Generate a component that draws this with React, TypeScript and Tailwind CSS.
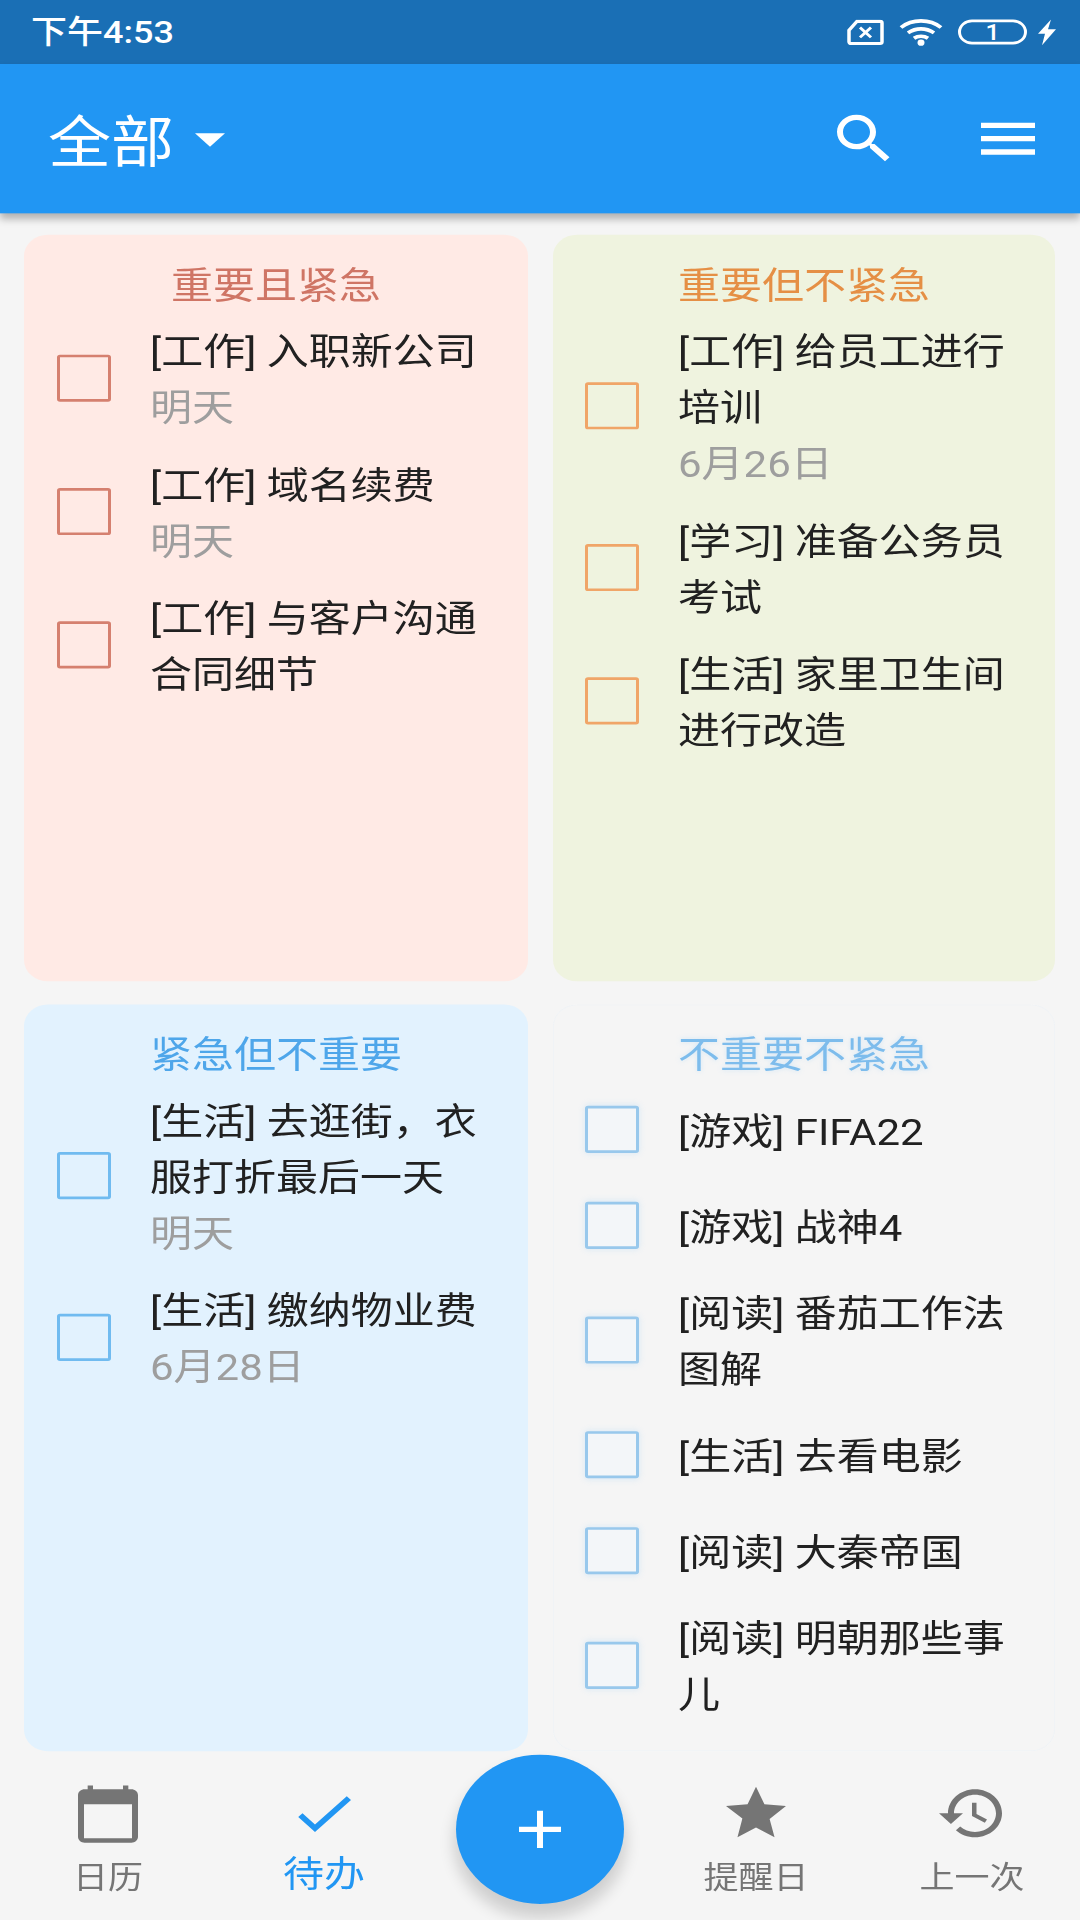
import React from "react"

const FONT = "font-['Roboto','Noto_Sans_CJK_SC',sans-serif]"

type Item = { text: string; date?: string }
type Quadrant = {
  title: string
  titleClass: string
  cardClass: string
  boxClass: string
  rowClass: string
  items: Item[]
}

const QUADRANTS: Quadrant[] = [
  {
    title: "重要且紧急",
    titleClass: "text-[#cf7565]",
    cardClass: "bg-[#ffeae5]",
    boxClass: "border-[#d5806f]",
    rowClass: "pl-[33px]",
    items: [
      { text: "[工作] 入职新公司", date: "明天" },
      { text: "[工作] 域名续费", date: "明天" },
      { text: "[工作] 与客户沟通合同细节" }
    ]
  },
  {
    title: "重要但不紧急",
    titleClass: "text-[#e58f45]",
    cardClass: "bg-[#eff3df]",
    boxClass: "border-[#f0a568]",
    rowClass: "pl-[32px]",
    items: [
      { text: "[工作] 给员工进行培训", date: "6月26日" },
      { text: "[学习] 准备公务员考试" },
      { text: "[生活] 家里卫生间进行改造" }
    ]
  },
  {
    title: "紧急但不重要",
    titleClass: "text-[#4ea6ea]",
    cardClass: "bg-[#e2f2fe]",
    boxClass: "border-[#70bbf0]",
    rowClass: "pl-[33px]",
    items: [
      { text: "[生活] 去逛街，衣服打折最后一天", date: "明天" },
      { text: "[生活] 缴纳物业费", date: "6月28日" }
    ]
  },
  {
    title: "不重要不紧急",
    titleClass: "text-[#7dbcec] [text-shadow:0_0_6px_rgba(144,202,249,0.35)]",
    cardClass: "bg-[#f5f5f5] ring-1 ring-inset ring-[#f0f3f6]",
    boxClass: "border-[#98c8ec] bg-[#f3f6f9] shadow-[0_0_7px_rgba(144,202,249,0.3)]",
    rowClass: "pl-[32px]",
    items: [
      { text: "[游戏] FIFA22" },
      { text: "[游戏] 战神4" },
      { text: "[阅读] 番茄工作法图解" },
      { text: "[生活] 去看电影" },
      { text: "[阅读] 大秦帝国" },
      { text: "[阅读] 明朝那些事儿" }
    ]
  }
]

const Icon = ({ d, size = 72, className }: { d: string; size?: number; className?: string }) => (
  <svg width={size} height={size} viewBox="0 0 24 24" fill="currentColor" className={className}>
    <path d={d} />
  </svg>
)

const ICONS = {
  search:
    "M15.5 14h-.79l-.28-.27C15.41 12.59 16 11.11 16 9.5 16 5.91 13.09 3 9.5 3S3 5.91 3 9.5 5.91 16 9.5 16c1.61 0 3.09-.59 4.23-1.57l.27.28v.79l5 4.99L20.49 19l-4.99-5zm-6 0C7.01 14 5 11.99 5 9.5S7.01 5 9.5 5 14 7.01 14 9.5 11.99 14 9.5 14z",
  menu: "M3 18h18v-2H3v2zm0-5h18v-2H3v2zm0-7v2h18V6H3z",
  drop: "M7 10l5 5 5-5z",
  calendar:
    "M19 3h-.9V1.7h-1.6V3h-9V1.7H5.9V3H5c-1.1 0-2 .9-2 2v14c0 1.1.9 2 2 2h14c1.1 0 2-.9 2-2V5c0-1.1-.9-2-2-2zM19.2 19.5H4.8V8h14.4z",
  check: "M9 16.17L4.83 12l-1.42 1.41L9 19 21 7l-1.41-1.41z",
  star: "M12 17.27L18.18 21l-1.64-6.91L22 9.24l-7.19-.61L12 2 9.19 8.63 2 9.24l5.46 4.73L5.82 21z",
  history:
    "M13 3c-4.97 0-9 4.03-9 9H1l3.89 3.89.07.14L9 12H6c0-3.87 3.13-7 7-7s7 3.13 7 7-3.13 7-7 7c-1.93 0-3.68-.79-4.94-2.06l-1.42 1.42C8.27 19.99 10.51 21 13 21c4.97 0 9-4.03 9-9s-4.03-9-9-9zm-1 5v5l4.28 2.54.72-1.21-3.5-2.08V8H12z",
  add: "M19 13h-6v6h-2v-6H5v-2h6V5h2v6h6v2z"
}

const StatusBar = () => (
  <div className="flex h-[72px] items-center justify-between bg-[#1a6fb5] pl-[31px] pr-[23px] text-white">
    <span className="text-[36px] font-medium leading-none">下午4:53</span>
    <div className="flex items-center">
      <svg width="37" height="29" viewBox="0 0 37 29" fill="none" stroke="white" strokeWidth="3.5">
        <path d="M10 2h23a2 2 0 0 1 2 2v21a2 2 0 0 1-2 2H4a2 2 0 0 1-2-2V12z" />
        <path d="M13 9l11 11M24 9L13 20" strokeWidth="3" />
      </svg>
      <svg width="44" height="31" viewBox="0 0 44 31" fill="none" stroke="white" strokeWidth="4" className="ml-[15px]">
        <path d="M2 10C13 0 31 0 42 10" />
        <path d="M9 16c8-6 18-6 26 0" />
        <path d="M15 22c4-3 10-3 14 0" />
        <circle cx="22" cy="27" r="3.5" fill="white" stroke="none" />
      </svg>
      <div className="ml-[15px] flex h-[28px] w-[69px] items-center justify-center rounded-full border-[3px] border-white text-[25px] font-medium leading-none">
        1
      </div>
      <svg width="20" height="29" viewBox="0 0 20 29" fill="white" className="ml-[10px]">
        <path d="M14 0L1 16h7L5 29 19 11h-8z" />
      </svg>
    </div>
  </div>
)

const AppBar = () => (
  <div className="relative z-10 flex h-[168px] items-center justify-between bg-[#2196f3] pl-[48px] pr-[36px] text-white shadow-[0_6px_8px_rgba(0,0,0,0.28)]">
    <div className="flex items-center">
      <span className="translate-y-[4px] text-[63px] leading-none">全部</span>
      <Icon d={ICONS.drop} />
    </div>
    <div className="flex items-center gap-[72px]">
      <Icon d={ICONS.search} />
      <Icon d={ICONS.menu} />
    </div>
  </div>
)

const TodoRow = ({ item, boxClass, rowClass }: { item: Item; boxClass: string; rowClass: string }) => (
  <div className={`mb-[24px] flex min-h-[84px] items-center pr-[40px] ${rowClass}`}>
    <div className={`h-[53px] w-[54px] shrink-0 -translate-y-[1px] rounded-[3px] border-[3px] ${boxClass}`} />
    <div className="ml-[39px] min-w-0 flex-1 translate-y-[2px] text-[42px] leading-[63px]">
      <div className="break-all text-[#212121]">{item.text}</div>
      {item.date ? <div className="text-[#9e9e9e]">{item.date}</div> : null}
    </div>
  </div>
)

const Card = ({ quadrant }: { quadrant: Quadrant }) => (
  <div className={`h-[840px] overflow-hidden rounded-[24px] ${quadrant.cardClass}`}>
    <div className={`pb-[10px] pt-[26px] text-center text-[42px] leading-[63px] ${quadrant.titleClass}`}>
      {quadrant.title}
    </div>
    {quadrant.items.map(item => (
      <TodoRow key={item.text} item={item} boxClass={quadrant.boxClass} rowClass={quadrant.rowClass} />
    ))}
  </div>
)

const NavItem = ({
  icon,
  label,
  size = 72,
  active = false,
  iconClass
}: {
  icon: string
  label?: string
  size?: number
  active?: boolean
  iconClass?: string
}) => (
  <div className={`flex flex-col items-center ${active ? "text-[#2196f3]" : "text-[#757575]"}`}>
    <div className="flex h-[72px] items-center justify-center">
      <Icon d={icon} size={size} className={iconClass} />
    </div>
    <span className={active ? "mt-[5px] text-[41px] leading-[56px]" : "mt-[9px] text-[35px] leading-[56px]"}>
      {label}
    </span>
  </div>
)

const BottomNav = () => (
  <div className="relative grid h-[180px] grid-cols-5 pt-[24px]">
    <NavItem icon={ICONS.calendar} size={80} iconClass="translate-y-[3px]" label="日历" />
    <NavItem icon={ICONS.check} label="待办" active />
    <div />
    <NavItem icon={ICONS.star} label="提醒日" />
    <NavItem icon={ICONS.history} label="上一次" />
    <button className="absolute left-[456px] top-[-6px] flex h-[168px] w-[168px] items-center justify-center rounded-full bg-[#2196f3] text-white shadow-[0_14px_16px_2px_rgba(0,0,0,0.16)]">
      <Icon d={ICONS.add} />
    </button>
  </div>
)

export default function App() {
  return (
    <div className={`h-[1920px] w-[1080px] overflow-hidden bg-[#f5f5f5] ${FONT}`}>
      {/* the capture is a 1080x2160 phone screen squeezed to 1920 */}
      <div className="h-[2160px] w-[1080px] origin-top-left scale-y-[0.8889]">
        <StatusBar />
        <AppBar />
        <div className="grid grid-cols-[504px_502px] gap-x-[25px] gap-y-[26px] pb-[10px] pl-[24px] pt-[24px]">
          {QUADRANTS.map(q => (
            <Card key={q.title} quadrant={q} />
          ))}
        </div>
        <BottomNav />
      </div>
    </div>
  )
}
